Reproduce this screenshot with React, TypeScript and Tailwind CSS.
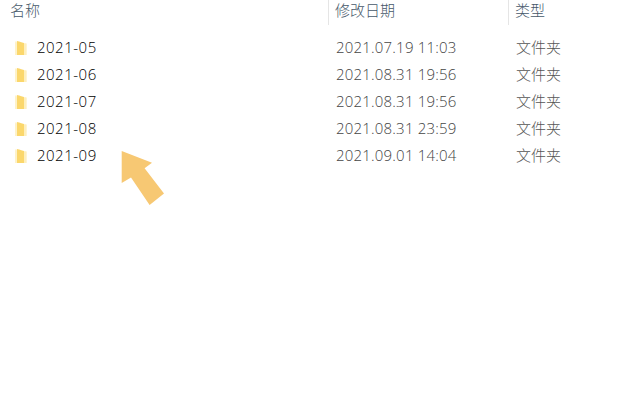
const rows = [
  ["2021-05", "2021.07.19 11:03"],
  ["2021-06", "2021.08.31 19:56"],
  ["2021-07", "2021.08.31 19:56"],
  ["2021-08", "2021.08.31 23:59"],
  ["2021-09", "2021.09.01 14:04"],
];

function Folder() {
  return (
    <svg width="13" height="16" viewBox="0 0 13 16" className="shrink-0">
      <path d="M1 1.5 H6 L7 3 H12.5 V15 H1 Z" fill="#fff3cc" />
      <path d="M3 1 L10 3 V15 L3 15 Z" fill="#fbd76c" />
      <path d="M10 4 H12.5 V15 H10 Z" fill="#feefbd" />
      <path d="M1 3 H3 V15 H1 Z" fill="#fef2c8" />
    </svg>
  );
}

export default function App() {
  return (
    <div className="relative w-[623px] h-[416px] bg-white overflow-hidden text-[15px] font-['Open_Sans','Noto_Sans_CJK_SC',sans-serif] font-light">
      <div className="flex h-[25px] text-[#46586a]">
        <div className="w-[329px] pl-[10px] leading-[20px] border-r border-[#e5e5e5]">名称</div>
        <div className="w-[180px] pl-[6px] leading-[20px] border-r border-[#e5e5e5]">修改日期</div>
        <div className="pl-[6px] leading-[20px]">类型</div>
      </div>
      <div className="mt-[9px] flex flex-col">
        {rows.map(([name, date]) => (
          <div key={name} className="flex h-[27px] items-center">
            <div className="w-[329px] pl-[14px] flex items-center gap-[10px] text-black tracking-[0.5px]">
              <Folder />
              <span>{name}</span>
            </div>
            <div className="w-[180px] pl-[7px] text-[#444444] tracking-[0.2px]">{date}</div>
            <div className="pl-[7px] text-[#555555]">文件夹</div>
          </div>
        ))}
      </div>
      <svg className="absolute left-[115px] top-[145px]" width="55" height="65" viewBox="115 145 55 65">
        <polygon points="121.7,151 152,162.7 144.6,168.3 164,193.5 149.6,205 131,177.5 121.7,183" fill="#f7c873" />
      </svg>
    </div>
  );
}
